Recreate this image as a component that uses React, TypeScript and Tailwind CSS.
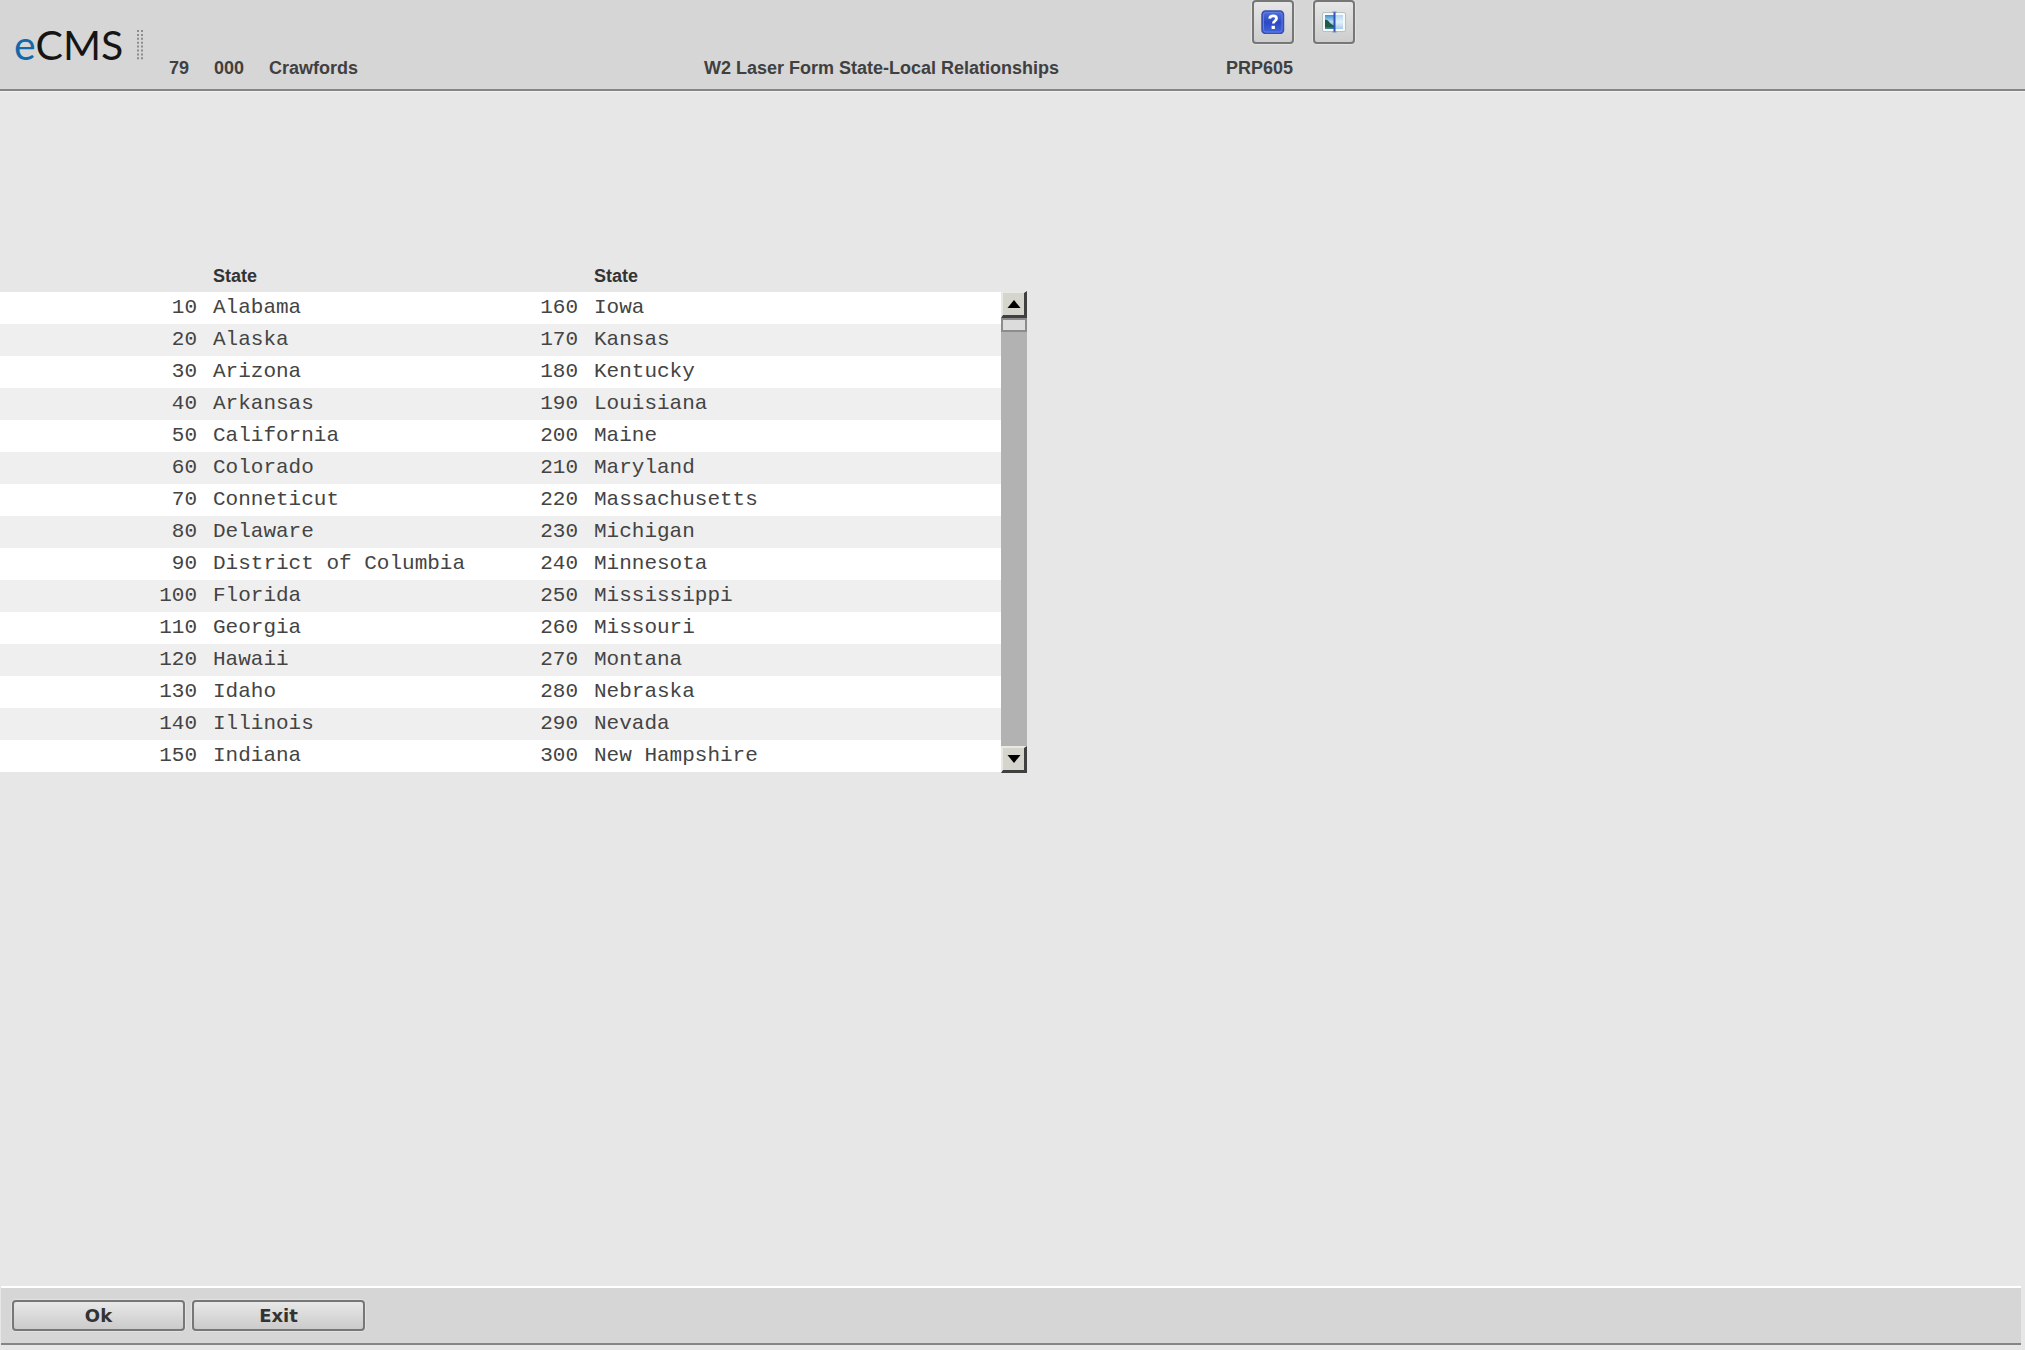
import React from 'react';

interface StateEntry {
  code: number;
  name: string;
}

const stateNames = [
  "Alabama", "Alaska", "Arizona", "Arkansas", "California",
  "Colorado", "Conneticut", "Delaware", "District of Columbia", "Florida",
  "Georgia", "Hawaii", "Idaho", "Illinois", "Indiana",
  "Iowa", "Kansas", "Kentucky", "Louisiana", "Maine",
  "Maryland", "Massachusetts", "Michigan", "Minnesota", "Mississippi",
  "Missouri", "Montana", "Nebraska", "Nevada", "New Hampshire",
];

const states: StateEntry[] = stateNames.map((name, index) => ({ code: (index + 1) * 10, name }));
const ROWS = 15;

const Logo = () => (
  <div className="flex items-center pl-3.5">
    <span className="w-[122px] font-['Lato',sans-serif] text-[41px] leading-[89px] text-[#151515]">
      <span className="text-[#1268a8]">e</span>CMS
    </span>
    <svg className="h-8 w-2" viewBox="0 0 8 32" aria-hidden="true">
      <path d="M2 1v30M6 1v30" stroke="#8c8c8c" strokeWidth={2} strokeDasharray="2 1.9" />
    </svg>
  </div>
);

const HelpIcon = () => (
  <svg className="h-6 w-6" viewBox="0 0 24 24" aria-hidden="true">
    <defs>
      <linearGradient id="help-fill" x1="0" y1="0" x2="0" y2="1">
        <stop offset="0" stopColor="#5274dc" />
        <stop offset="0.5" stopColor="#2b49c4" />
        <stop offset="1" stopColor="#4266dc" />
      </linearGradient>
    </defs>
    <rect x="1" y="1" width="21.5" height="22.5" rx="3.5" fill="url(#help-fill)" stroke="#3a4fae" strokeWidth={1.5} />
    <rect x="2.5" y="2.5" width="18.5" height="19.5" rx="2.5" fill="none" stroke="#5f7fe0" strokeWidth={1} />
    <path d="M8.6 8.6c.3-2 1.6-2.8 3.4-2.8 2 0 3.5 1 3.5 2.8 0 2.300-3.200 2.500-3.200 5" fill="none" stroke="#fff" strokeWidth={2.8} />
    <rect x="10.6" y="15.8" width="3.3" height="3.2" fill="#fff" />
  </svg>
);

const PictureIcon = () => (
  <svg className="h-6 w-6" viewBox="0 0 24 24" aria-hidden="true">
    <defs>
      <linearGradient id="sky" x1="0" y1="0" x2="0" y2="1">
        <stop offset="0" stopColor="#3f8fd2" />
        <stop offset="0.5" stopColor="#b9dcf0" />
        <stop offset="1" stopColor="#2f7893" />
      </linearGradient>
      <linearGradient id="sky-light" x1="0" y1="0" x2="0" y2="1">
        <stop offset="0" stopColor="#b5d5f3" />
        <stop offset="0.5" stopColor="#e3f1fb" />
        <stop offset="1" stopColor="#a5cbe9" />
      </linearGradient>
    </defs>
    <rect x="0.5" y="2.5" width="23" height="19" rx="1.5" fill="#f4f9fa" stroke="#b4c0c3" />
    <rect x="3" y="5" width="9" height="14" fill="url(#sky)" />
    <path d="M3 10c2-.8 3.500 .8 5 3 1.500 1.600 3 2.300 4 2.500V17.500H3z" fill="#1f5a48" />
    <rect x="13" y="5" width="8" height="14" fill="url(#sky-light)" />
    <path d="M12.500 2v20" stroke="#2f54b8" strokeWidth={2} />
    <path d="M10.500 2h4M10.500 22h4" stroke="#6f8fd0" strokeWidth={1} />
  </svg>
);

const ToolButton = ({ label, children }: { label: string; children: React.ReactNode }) => (
  <button
    type="button"
    aria-label={label}
    className="flex h-11 w-[42px] items-center justify-center rounded-[4px] border-2 border-[#777] bg-linear-to-b from-[#e6e6e6] to-[#cdcdcd] shadow-[0_0_0_1px_#e2e2e2]"
  >
    {children}
  </button>
);

const ActionButton = ({ children }: { children: React.ReactNode }) => (
  <button
    type="button"
    className="h-[31px] w-[173px] rounded-[4px] border-2 border-[#777] bg-linear-to-b from-[#e8e8e8] to-[#cbcbcb] font-['DejaVu_Sans','Open_Sans',sans-serif] text-[18px] leading-[26px] font-bold text-[#333] shadow-[0_0_0_1px_#e2e2e2]"
  >
    {children}
  </button>
);

const ArrowButton = ({ direction }: { direction: 'up' | 'down' }) => (
  <button
    type="button"
    aria-label={`Scroll ${direction}`}
    className="flex h-[27px] w-full items-center justify-center border-t-2 border-r-3 border-b-3 border-l-2 border-t-[#e9e9e4] border-r-[#404040] border-b-[#404040] border-l-[#e9e9e4] bg-[#d5d5cd]"
  >
    <svg className="h-2 w-3.5" viewBox="0 0 14 8" aria-hidden="true">
      <path d={direction === 'up' ? "M7 0l6.5 8h-13z" : "M7 8L.5 0h13z"} fill="#000" />
    </svg>
  </button>
);

const StateTable = () => (
  <table className="w-[1001px] table-fixed border-collapse font-['Liberation_Mono',monospace] text-[21px] text-[#444]">
    <colgroup>
      <col className="w-[205px]" />
      <col className="w-[325px]" />
      <col className="w-[56px]" />
      <col />
    </colgroup>
    <thead>
      <tr className="h-8 text-left font-['Liberation_Sans',sans-serif] text-[18px] leading-8 text-[#333]">
        <td />
        <th scope="col" className="pl-2">State</th>
        <td />
        <th scope="col" className="pl-2">State</th>
      </tr>
    </thead>
    <tbody>
      {states.slice(0, ROWS).map((left, index) => {
        const right = states[index + ROWS];
        return (
          <tr key={left.code} className="h-8 leading-8 odd:bg-white even:bg-[#efefef]">
            <td className="pr-2 text-right">{left.code}</td>
            <td className="pl-2">{left.name}</td>
            <td className="pr-2 text-right">{right.code}</td>
            <td className="pl-2">{right.name}</td>
          </tr>
        );
      })}
    </tbody>
  </table>
);

const App = () => {
  return (
    <div className="flex min-h-screen flex-col bg-[#e7e7e7] font-['Liberation_Sans',sans-serif]">
      <header className="flex border-b-2 border-[#858585] bg-[#d6d6d6] shadow-[0_1px_0_#f2f2f2]">
        <Logo />
        <div className="flex flex-col pl-[25px]">
          <div className="flex gap-[19px] self-end pr-1">
            <ToolButton label="Help"><HelpIcon /></ToolButton>
            <ToolButton label="Picture"><PictureIcon /></ToolButton>
          </div>
          <div className="flex pt-3 text-[18px] leading-6 font-bold text-[#404040]">
            <span className="w-[45px]">79</span>
            <span className="w-[55px]">000</span>
            <span className="w-[435px]">Crawfords</span>
            <h1 className="w-[522px]">W2 Laser Form State-Local Relationships</h1>
            <span className="w-[133px]">PRP605</span>
          </div>
        </div>
      </header>

      <main className="flex flex-1 items-start pt-[169px]">
        <StateTable />
        {/* Scroll bar */}
        <div className="mt-[31px] flex h-[482px] w-[26px] flex-col bg-[#b2b2b2]">
          <ArrowButton direction="up" />
          <div className="h-3.5 border-2 border-[#8c8c8c] bg-[#dcdcdc]" />
          <div className="flex-1" />
          <ArrowButton direction="down" />
        </div>
      </main>

      <footer className="mr-1 mb-[5px] ml-px flex gap-[7px] border-t-2 border-b-2 border-t-white border-b-[#858585] bg-[#d6d6d6] py-3 pl-[11px]">
        <ActionButton>Ok</ActionButton>
        <ActionButton>Exit</ActionButton>
      </footer>
    </div>
  );
};

export default App;
